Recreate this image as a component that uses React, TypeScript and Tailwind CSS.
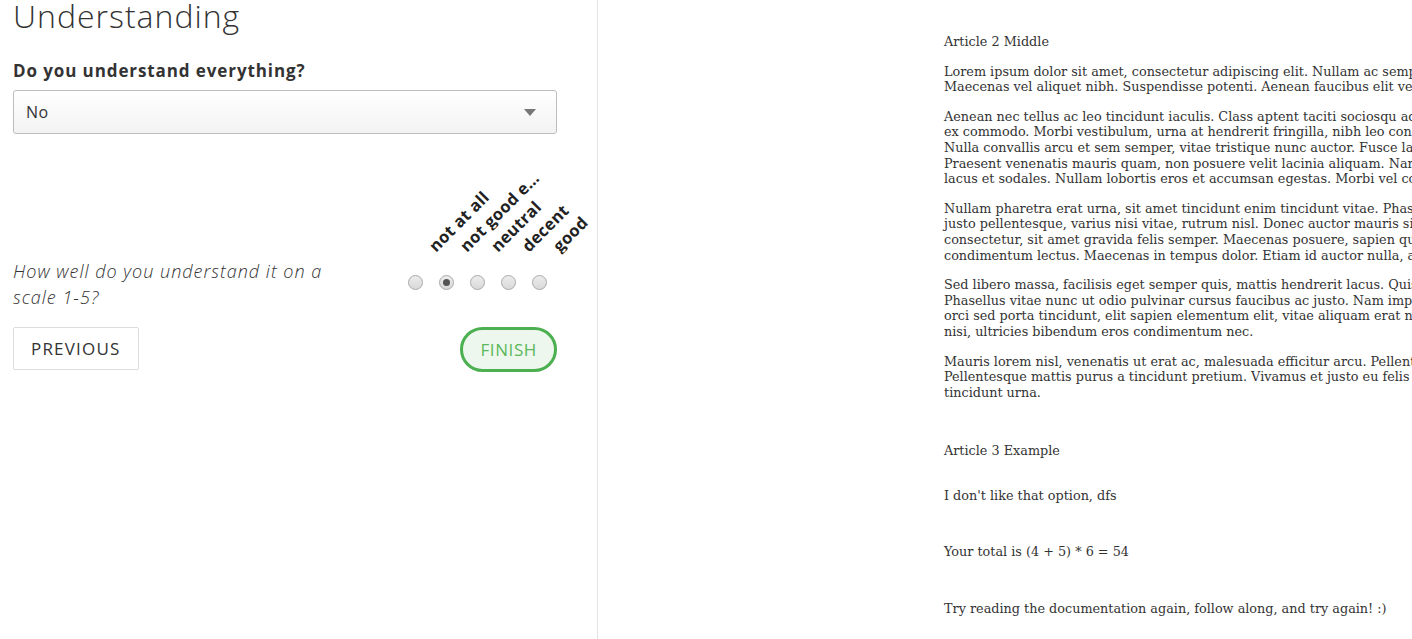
import React from "react";

const labels = ["not at all", "not good enough", "neutral", "decent", "good"];

const paragraphs: string[][] = [
  [
    "Lorem ipsum dolor sit amet, consectetur adipiscing elit. Nullam ac semper ipsum, vitae gravida velit.",
    "Maecenas vel aliquet nibh. Suspendisse potenti. Aenean faucibus elit vel lorem pretium tempus.",
  ],
  [
    "Aenean nec tellus ac leo tincidunt iaculis. Class aptent taciti sociosqu ad litora torquent per conubia nostra.",
    "ex commodo. Morbi vestibulum, urna at hendrerit fringilla, nibh leo consequat orci, vel pretium.",
    "Nulla convallis arcu et sem semper, vitae tristique nunc auctor. Fusce laoreet ornare mi.",
    "Praesent venenatis mauris quam, non posuere velit lacinia aliquam. Nam rutrum nisl.",
    "lacus et sodales. Nullam lobortis eros et accumsan egestas. Morbi vel congue dolor.",
  ],
  [
    "Nullam pharetra erat urna, sit amet tincidunt enim tincidunt vitae. Phasellus vitae",
    "justo pellentesque, varius nisi vitae, rutrum nisl. Donec auctor mauris sit amet",
    "consectetur, sit amet gravida felis semper. Maecenas posuere, sapien quis lacinia",
    "condimentum lectus. Maecenas in tempus dolor. Etiam id auctor nulla, at tempor",
  ],
  [
    "Sed libero massa, facilisis eget semper quis, mattis hendrerit lacus. Quisque lorem",
    "Phasellus vitae nunc ut odio pulvinar cursus faucibus ac justo. Nam imperdiet enim",
    "orci sed porta tincidunt, elit sapien elementum elit, vitae aliquam erat nisl quis",
    "nisi, ultricies bibendum eros condimentum nec.",
  ],
  [
    "Mauris lorem nisl, venenatis ut erat ac, malesuada efficitur arcu. Pellentesque quis",
    "Pellentesque mattis purus a tincidunt pretium. Vivamus et justo eu felis dictum",
    "tincidunt urna.",
  ],
];

function Radio({ checked }: { checked?: boolean }) {
  return (
    <div className="w-[15px] h-[15px] rounded-full border border-[#a9a9a9] bg-gradient-to-b from-[#ececec] to-[#d9d9d9] flex items-center justify-center">
      {checked && <div className="w-[7px] h-[7px] rounded-full bg-[#555]" />}
    </div>
  );
}

export default function App() {
  return (
    <div className="flex w-[1412px] h-[639px] overflow-hidden bg-white text-[#333]">
      {/* Left panel */}
      <div
        className="w-[598px] shrink-0 h-full border-r border-[#e3e3e3] pl-[13px] pr-[40px]"
        style={{ fontFamily: '"Open Sans", "Noto Sans", sans-serif' }}
      >
        <h1 className="text-[32px] leading-[36px] font-light -mt-[2px] tracking-[1px]">Understanding</h1>
        <div className="mt-[26px] text-[17px] leading-[22px] font-bold tracking-[0.9px]">Do you understand everything?</div>
        <div className="mt-[8px] h-[44px] w-full rounded-[3px] border border-[#bdbdbd] bg-gradient-to-b from-white to-[#f3f3f3] flex items-center justify-between pl-[12px] pr-[20px]">
          <span className="text-[16px] tracking-[0.5px]">No</span>
          <svg width="12" height="7" viewBox="0 0 12 7">
            <path d="M0 0 L12 0 L6 7 Z" fill="#777" />
          </svg>
        </div>

        <div className="mt-[34px] flex items-end justify-between">
          <div className="w-[330px] text-[18px] leading-[26px] italic font-light tracking-[1px] mb-[-20px]">
            How well do you understand it on a scale 1-5?
          </div>
          <div className="flex mr-[2px]">
            {labels.map((l, i) => (
              <div key={i} className="w-[31px] flex flex-col items-center">
                <div className="relative h-[107px] w-full">
                  <span className="absolute left-[38px] bottom-[20px] origin-bottom-left -rotate-45 whitespace-nowrap max-w-[110px] overflow-hidden text-ellipsis text-[16.5px] leading-[19px] font-bold tracking-[0.3px] text-[#222]">
                    {l}
                  </span>
                </div>
                <Radio checked={i === 1} />
              </div>
            ))}
          </div>
        </div>

        <div className="mt-[37px] flex items-start justify-between">
          <button className="h-[43px] px-[17px] border border-[#dcdcdc] rounded-[2px] bg-white text-[17px] uppercase tracking-[1.2px] text-[#333]">
            Previous
          </button>
          <button className="h-[45px] px-[17px] border-[3px] border-[#4caf50] rounded-full bg-[#edf7ed] text-[17px] uppercase tracking-[0.6px] text-[#5cb85c]">
            Finish
          </button>
        </div>
      </div>

      {/* Right panel */}
      <div
        className="flex-1 h-full overflow-hidden pl-[346px] pt-[34px] text-[12.8px] leading-[15.6px] text-[#333]"
        style={{ fontFamily: '"DejaVu Serif", "Liberation Serif", serif' }}
      >
        <div className="w-[900px]">
          <p className="mb-[14px] whitespace-nowrap">Article 2 Middle</p>
          {paragraphs.map((p, i) => (
            <p key={i} className="mb-[14px] whitespace-nowrap">
              {p.map((line, j) => (
                <React.Fragment key={j}>
                  {line}
                  {j < p.length - 1 && <br />}
                </React.Fragment>
              ))}
            </p>
          ))}
          <p className="mt-[43px] whitespace-nowrap">Article 3 Example</p>
          <p className="mt-[29px] whitespace-nowrap">I don't like that option, dfs</p>
          <p className="mt-[41px] whitespace-nowrap">Your total is (4 + 5) * 6 = 54</p>
          <p className="mt-[41px] whitespace-nowrap">Try reading the documentation again, follow along, and try again! :)</p>
        </div>
      </div>
    </div>
  );
}
